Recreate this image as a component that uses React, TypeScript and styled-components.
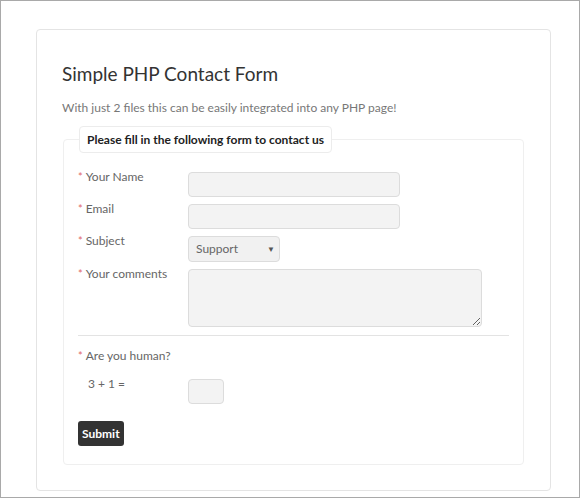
import React from 'react';
import styled, { createGlobalStyle } from 'styled-components';

const GlobalStyle = createGlobalStyle`
  html, body {
    margin: 0;
    padding: 0;
    background: #fff;
  }
  * {
    box-sizing: border-box;
  }
`;

const Frame = styled.div`
  width: 580px;
  height: 498px;
  border: 1px solid #a9a9a9;
  background: #fff;
  padding: 28px 0 0 35px;
  font-family: Lato, "Open Sans", sans-serif;
`;

const Card = styled.div`
  width: 515px;
  height: 462px;
  border: 1px solid #e4e4e4;
  border-radius: 4px;
  padding: 30px 26px 0 26px;
`;

const Title = styled.h1`
  margin: 0 0 0 -1px;
  font-size: 19px;
  line-height: 28px;
  font-weight: 400;
  color: #333;
`;

const Lead = styled.p`
  margin: 11px 0 0 -1px;
  font-size: 12px;
  line-height: 18px;
  color: #777;
`;

const Fieldset = styled.fieldset`
  margin: 9px 0 0 0;
  width: 461px;
  border: 1px solid #efefef;
  border-radius: 4px;
  padding: 19px 14px 18px 14px;
`;

const Legend = styled.legend`
  margin-left: 1px;
  padding: 0 7px;
  height: 27px;
  line-height: 25px;
  border: 1px solid #ececec;
  border-radius: 4px;
  font-size: 12px;
  font-weight: 700;
  color: #222;
`;

const Row = styled.div`
  display: flex;
  align-items: flex-start;
  margin-bottom: 7px;
`;

const Label = styled.label<{ $indent?: number }>`
  width: 110px;
  flex-shrink: 0;
  padding-left: ${p => p.$indent ?? 0}px;
  font-size: 12px;
  line-height: 10px;
  color: #666;
`;

const Star = styled.span`
  color: #e06666;
  margin-right: 3px;
  font-size: 11px;
`;

const Input = styled.input<{ $w: number }>`
  width: ${p => p.$w}px;
  height: 25px;
  border: 1px solid #dcdcdc;
  border-radius: 4px;
  background: #f3f3f3;
  outline: none;
`;

const SelectBox = styled.div`
  position: relative;
  width: 92px;
  height: 26px;
  border: 1px solid #dcdcdc;
  border-radius: 4px;
  background: #f1f1f1;
  padding-left: 7px;
  font-size: 12px;
  line-height: 24px;
  color: #666;
`;

const Arrow = styled.span`
  position: absolute;
  right: 4px;
  top: 0;
  font-size: 8px;
  color: #555;
`;

const TextArea = styled.textarea`
  width: 294px;
  height: 58px;
  border: 1px solid #dcdcdc;
  border-radius: 4px;
  background: #f3f3f3;
  resize: both;
  outline: none;
`;

const Divider = styled.hr`
  margin: 8px 0 12px 0;
  border: none;
  border-top: 1px solid #e3e3e3;
`;

const Question = styled.div`
  font-size: 12px;
  line-height: 16px;
  color: #666;
  margin-bottom: 15px;
`;

const Submit = styled.button`
  margin-top: 10px;
  height: 25px;
  padding: 0 4px;
  border: none;
  border-radius: 3px;
  background: #333;
  color: #fff;
  font-family: inherit;
  font-size: 12px;
  font-weight: 700;
`;

export default function App() {
  return (
    <>
      <GlobalStyle />
      <Frame>
        <Card>
          <Title>Simple PHP Contact Form</Title>
          <Lead>With just 2 files this can be easily integrated into any PHP page!</Lead>
          <Fieldset>
            <Legend>Please fill in the following form to contact us</Legend>
            <Row>
              <Label><Star>*</Star>Your Name</Label>
              <Input $w={212} />
            </Row>
            <Row>
              <Label><Star>*</Star>Email</Label>
              <Input $w={212} />
            </Row>
            <Row>
              <Label><Star>*</Star>Subject</Label>
              <SelectBox>Support<Arrow>▼</Arrow></SelectBox>
            </Row>
            <Row>
              <Label><Star>*</Star>Your comments</Label>
              <TextArea />
            </Row>
            <Divider />
            <Question><Star>*</Star>Are you human?</Question>
            <Row>
              <Label $indent={10}>3 + 1 =</Label>
              <Input $w={36} />
            </Row>
            <Submit>Submit</Submit>
          </Fieldset>
        </Card>
      </Frame>
    </>
  );
}
